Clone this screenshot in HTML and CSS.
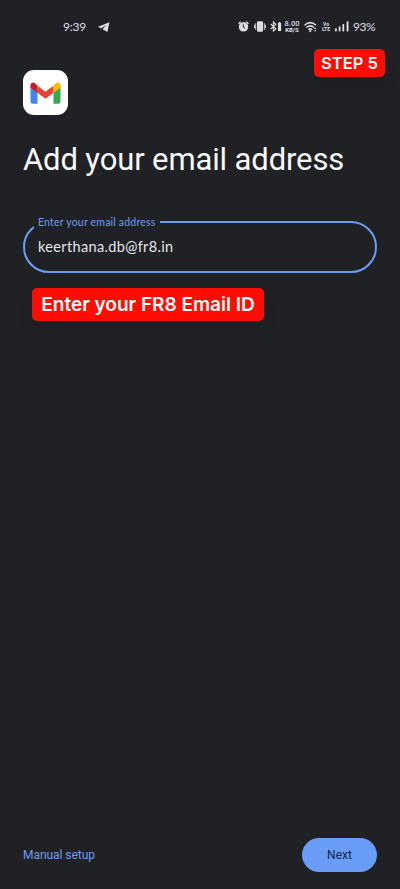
FILE: index.html
```html
<!DOCTYPE html>
<html lang="en">
<head>
<meta charset="utf-8">
<meta name="viewport" content="width=device-width, initial-scale=1">
<title>Add your email address</title>
<link rel="stylesheet" href="styles.css">
</head>
<body>
<div class="screen">
  <header class="status">
    <div class="status-left">
      <span class="clock">9:39</span>
      <svg width="12" height="10" viewBox="0 0 12 10" fill="#dedfe3"><path d="M11.5.2 0 4.8l3.1 1.6 5-3.4-3.5 4.2 4.8 2.7z"/></svg>
    </div>
    <div class="status-right">
      <svg class="i-alarm" width="11" height="11" viewBox="0 0 11 11"><circle cx="5.5" cy="5.9" r="4.7" fill="#dedfe3"/><path d="M.5 2.7 2.7.7M10.5 2.7 8.3.7" stroke="#dedfe3" stroke-width="1.4"/><path d="M5.3 3.3V6l1.8 1.4" stroke="#202125" fill="none"/></svg>
      <svg class="i-vibrate" width="12" height="11" viewBox="0 0 12 11"><rect x="3" y=".2" width="6" height="10.6" rx="1" fill="#dedfe3"/><path d="M1.7 2.2v6.6M10.3 2.2v6.6M.5 3.8v3.4M11.5 3.8v3.4" stroke="#dedfe3" stroke-width=".9"/></svg>
      <svg class="i-bluetooth" width="12" height="11" viewBox="0 0 12 11"><path d="m.7 3 5.2 4.7L3.4 10V1l2.5 2.3L.7 8" stroke="#dedfe3" stroke-width="1.1" fill="none"/><path d="M8 2h.8V1h1.5v1h.8v8H8z" fill="#dedfe3"/></svg>
      <div class="speed"><span>8.00</span><span class="unit">KB/S</span></div>
      <svg class="i-wifi" width="14" height="12" viewBox="0 0 14 12"><g fill="none" stroke="#dedfe3" stroke-width="1.5"><path d="M.6 4.2Q6.2-.9 12 4.2M2.5 6.5q3.7-3.2 7.6 0M4.4 8.6q1.9-1.5 3.8 0"/></g><circle cx="6.3" cy="10.1" r="1.1" fill="#dedfe3"/><path d="m9.8 8 1.3-1.5L12.4 8zM9.8 9.2h2.6l-1.3 1.5z" fill="#dedfe3"/></svg>
      <div class="volte"><span>Vo</span><span>LTE</span></div>
      <svg class="i-signal" width="14" height="11" viewBox="0 0 14 11" fill="#dedfe3"><rect x="0" y="7.3" width="1.8" height="3.2" rx=".7"/><rect x="3.7" y="5.3" width="1.8" height="5.2" rx=".7"/><rect x="7.4" y="3" width="1.8" height="7.5" rx=".7"/><rect x="11.6" y=".3" width="1.9" height="10.2" rx=".7"/></svg>
      <span class="battery">93%</span>
    </div>
  </header>

  <div class="tag step">STEP 5</div>

  <main>
    <div class="logo">
      <svg width="31" height="24" viewBox="0 0 31 24">
        <path d="M.5 5v15.8q0 2 2 2h5V10.5z" fill="#4285f4"/>
        <path d="M23.5 10.5v12.3h5q2 0 2-2V5z" fill="#34a853"/>
        <path d="m7.5 4.8 8 6 8-6v7l-8 6-8-6z" fill="#ea4335"/>
        <path d="M23.5 4.8 26 2.2c2-1.5 4.5-.2 4.5 2.2v2.4l-7 5.2z" fill="#fbbc04"/>
        <path d="M7.5 4.8 5 2.2C3 .7.5 2 .5 4.4v2.4l7 5.2z" fill="#c5221f"/>
      </svg>
    </div>
    <h1>Add your email address</h1>
    <div class="field">
      <span class="label">Enter your email address</span>
      <span class="value">keerthana.db@fr8.in</span>
    </div>
    <div class="tag hint">Enter your FR8 Email ID</div>
  </main>

  <footer>
    <a class="manual">Manual setup</a>
    <button class="next" type="button">Next</button>
  </footer>
</div>
</body>
</html>
```
FILE: styles.css
```css
* { box-sizing: border-box; }
body { margin: 0; background: #202125; }
.screen {
  position: relative;
  display: flex;
  flex-direction: column;
  height: 889px;
  padding: 0 23px;
  color: #f8f9fa;
  background: #202125;
  font-family: Roboto, sans-serif;
}
svg { display: block; flex: none; }
.status {
  display: flex;
  justify-content: space-between;
  height: 53px;
  padding-left: 40px;
  color: #dedfe3;
  font-family: Lato, sans-serif;
}
.status-left, .status-right { display: flex; align-items: center; }
.status-left { gap: 12px; }
.clock { width: 23px; font-size: 12px; letter-spacing: -.2px; }
.status-right { margin-right: 2px; }
.i-vibrate { margin-left: 5px; }
.i-bluetooth { margin-left: 4px; }
.i-wifi { margin-left: 4px; }
.speed {
  display: flex;
  flex-direction: column;
  align-items: center;
  width: 16px;
  margin-left: 2px;
  font: 500 7.5px/7px Roboto, sans-serif;
}
.unit { font-size: 6px; font-weight: 700; line-height: 6px; }
.volte {
  display: flex;
  flex-direction: column;
  align-items: center;
  width: 8px;
  margin-left: 4px;
  font: 700 5px/5px Roboto, sans-serif;
}
.i-signal { margin-left: 5px; }
.battery { width: 22px; margin-left: 4px; font-size: 12px; letter-spacing: -.4px; white-space: nowrap; }
.tag {
  color: #fff;
  background: #ff0d05;
  border-radius: 5px;
  font-family: Inter, sans-serif;
  font-weight: 600;
  text-align: center;
  white-space: nowrap;
  box-shadow: 0 14px 20px rgba(0, 0, 0, .06);
}
.step {
  position: absolute;
  top: 49px;
  left: 314px;
  width: 71px;
  height: 28px;
  font-size: 16.5px;
  line-height: 28px;
}
main { flex: 1; padding-top: 17px; }
.logo {
  display: flex;
  align-items: center;
  justify-content: center;
  width: 45px;
  height: 45px;
  border-radius: 11px;
  background: #fff;
}
h1 {
  margin: 25px 0 0;
  font-size: 31px;
  font-weight: 400;
  line-height: 40px;
  letter-spacing: -.13px;
  white-space: nowrap;
}
.field {
  position: relative;
  display: flex;
  align-items: center;
  height: 52px;
  margin-top: 41px;
  padding-left: 13px;
  border: 2px solid #6c9df0;
  border-radius: 26px;
}
.label {
  position: absolute;
  top: -8px;
  left: 9px;
  width: 126px;
  height: 14px;
  padding-left: 4px;
  color: #6c9df0;
  background: #202125;
  font: 10.5px/15px Lato, sans-serif;
  letter-spacing: .2px;
  white-space: nowrap;
}
.value { color: #e5e6e9; font: 14.5px/20px Lato, sans-serif; letter-spacing: .35px; }
.hint {
  width: 232px;
  height: 33px;
  margin: 15px 0 0 9px;
  font-size: 19px;
  line-height: 33px;
}
footer {
  display: flex;
  align-items: center;
  justify-content: space-between;
  height: 34px;
  margin-bottom: 17px;
}
.manual { color: #6c9df0; font-size: 12px; letter-spacing: -.05px; }
.next {
  width: 75px;
  height: 34px;
  padding: 0;
  border: 0;
  border-radius: 17px;
  color: #15244a;
  background: #699df7;
  font: 12px Roboto, sans-serif;
}
```
